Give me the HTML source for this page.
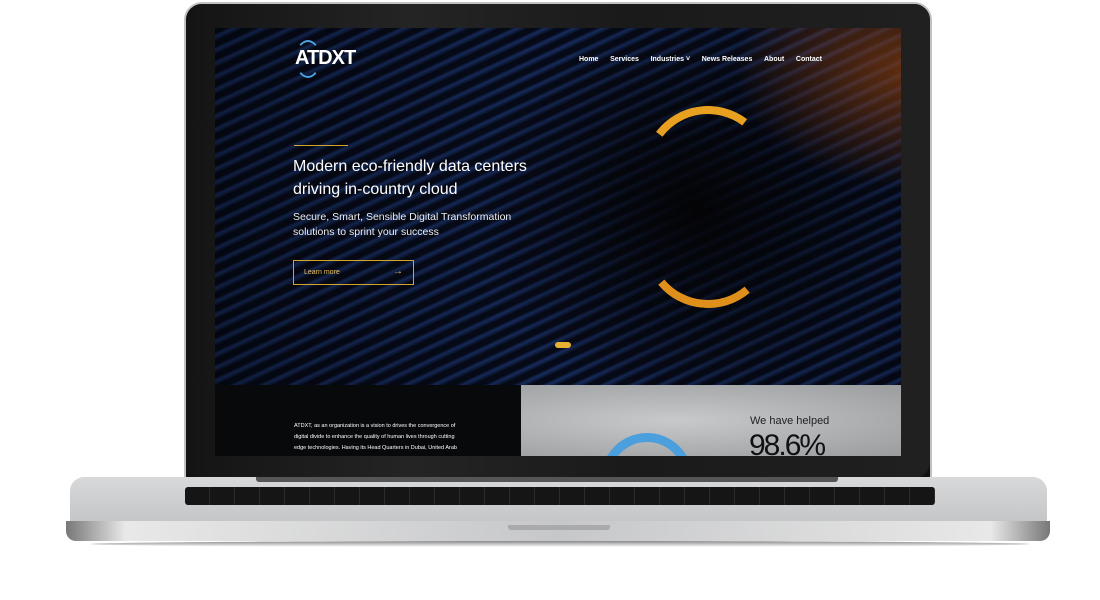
<!DOCTYPE html>
<html><head><style>
*{margin:0;padding:0;box-sizing:border-box}
body{width:1100px;height:600px;background:#fff;position:relative;overflow:hidden;font-family:"Liberation Sans",sans-serif}
.a{position:absolute}
</style></head><body>
<div class="a" style="left:184px;top:2px;width:748px;height:478px;background:#111;border-radius:18px 18px 4px 4px;border:2px solid #bfc1c3"></div>
<div class="a" style="left:186px;top:4px;width:744px;height:474px;border-radius:16px;background:linear-gradient(90deg,#141414,#242424 30%,#1a1a1a 60%,#202020)"></div>
<div class="a" style="left:215px;top:28px;width:686px;height:357px;overflow:hidden;background:
radial-gradient(ellipse 180px 120px at 700px 40px,rgba(200,90,20,.7),transparent),
radial-gradient(ellipse 220px 200px at 480px 180px,#050508,transparent),
repeating-linear-gradient(155deg,#070c1c 0 5px,#1b3470 8px,#0a1228 12px),#0b1430">
<div class="a" style="left:0;top:0;width:686px;height:357px;background:linear-gradient(90deg,rgba(0,0,0,.4),rgba(0,0,0,.15) 50%,rgba(0,0,0,.3))"></div>
<div class="a" style="left:428px;top:78px;width:130px;height:130px;border-radius:50%;border:8px solid transparent;border-top-color:#e8a020;transform:rotate(-8deg)"></div>
<div class="a" style="left:428px;top:150px;width:130px;height:130px;border-radius:50%;border:8px solid transparent;border-bottom-color:#e0901a;transform:rotate(5deg)"></div>
<div class="a" style="left:340px;top:314px;width:16px;height:6px;border-radius:3px;background:#e8b030"></div>
<div class="a" style="left:80px;top:19px;color:#fff;font-size:20px;font-weight:bold;letter-spacing:-1px">ATDXT</div>
<div class="a" style="left:80px;top:12px;width:26px;height:38px;border:2px solid #4aa3e0;border-radius:50%;border-left-color:transparent;border-right-color:transparent"></div>
<div class="a" style="left:364px;top:28px;color:#fff;font-size:7px;font-weight:bold;white-space:nowrap">Home&nbsp;&nbsp;&nbsp;&nbsp;&nbsp;&nbsp;Services&nbsp;&nbsp;&nbsp;&nbsp;&nbsp;&nbsp;Industries ˅&nbsp;&nbsp;&nbsp;&nbsp;&nbsp;&nbsp;News Releases&nbsp;&nbsp;&nbsp;&nbsp;&nbsp;&nbsp;About&nbsp;&nbsp;&nbsp;&nbsp;&nbsp;&nbsp;Contact</div>
<div class="a" style="left:79px;top:117px;width:54px;height:1px;background:#d4a52a"></div>
<div class="a" style="left:78px;top:127px;color:#fff;font-size:16px;line-height:23px;font-weight:300">Modern eco-friendly data centers<br>driving in-country cloud</div>
<div class="a" style="left:78px;top:182px;color:#eee;font-size:10.5px;line-height:15px">Secure, Smart, Sensible Digital Transformation<br>solutions to sprint your success</div>
<div class="a" style="left:78px;top:232px;width:121px;height:25px;border:1.5px solid #d4a52a;color:#e8c060;font-size:7px;padding:8px 10px">Learn more<span style="position:absolute;right:10px;top:5px;font-size:10px">→</span></div>
</div>
<div class="a" style="left:215px;top:385px;width:306px;height:71px;background:#08090b"></div>
<div class="a" style="left:294px;top:421px;color:#fff;font-size:5.5px;line-height:11px">ATDXT, as an organization is a vision to drives the convergence of<br>digital divide to enhance the quality of human lives through cutting<br>edge technologies. Having its Head Quarters in Dubai, United Arab</div>
<div class="a" style="left:521px;top:385px;width:380px;height:71px;overflow:hidden;background:radial-gradient(ellipse at 40% 50%,#c8c9cb,#9a9c9e)">
<div class="a" style="left:80px;top:48px;width:92px;height:92px;border-radius:50%;border:9px solid #4a9fdc"></div>
<div class="a" style="left:229px;top:30px;color:#222;font-size:11px">We have helped</div>
<div class="a" style="left:228px;top:44px;color:#111;font-size:30px;font-weight:300;letter-spacing:-2px">98.6%</div>
</div>
<div class="a" style="left:70px;top:477px;width:977px;height:44px;background:linear-gradient(#d8d9db,#c4c6c8);border-radius:14px 14px 0 0"></div>
<div class="a" style="left:256px;top:477px;width:582px;height:5px;background:#555;border-radius:0 0 3px 3px"></div>
<div class="a" style="left:185px;top:487px;width:750px;height:18px;background:repeating-linear-gradient(90deg,#151515 0 24px,#2a2a2a 24px 25px);border-radius:3px"></div>
<div class="a" style="left:66px;top:521px;width:984px;height:20px;background:linear-gradient(90deg,#777,#e8e8e8 6%,#c6c7c9 50%,#e8e8e8 94%,#777);border-radius:0 0 10px 10px"></div>
<div class="a" style="left:508px;top:525px;width:102px;height:5px;background:#aaa;border-radius:0 0 3px 3px"></div>
<div class="a" style="left:90px;top:541px;width:940px;height:6px;background:linear-gradient(#888,rgba(255,255,255,0));border-radius:50%"></div>
</body></html>
